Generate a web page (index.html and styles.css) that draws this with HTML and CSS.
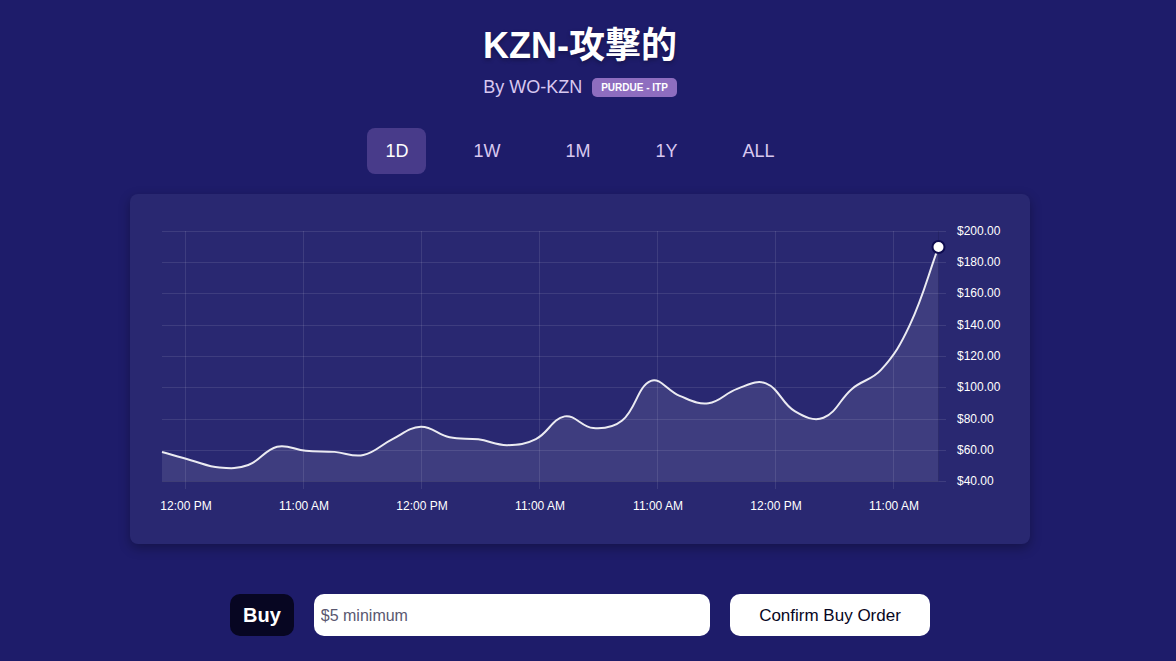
FILE: index.html
```html
<!DOCTYPE html>
<html lang="en">
<head>
<meta charset="utf-8">
<meta name="viewport" content="width=device-width, initial-scale=1">
<title>KZN-攻撃的</title>
<link rel="stylesheet" href="styles.css">
</head>
<body>
<main class="page">
  <header class="heading">
    <h1 class="title">KZN-攻撃的</h1>
    <div class="byline">
      <p class="author">By WO-KZN</p>
      <span class="badge">PURDUE - ITP</span>
    </div>
  </header>
  <nav class="ranges" aria-label="Time range">
    <button type="button" class="range range-active" aria-pressed="true">1D</button>
    <button type="button" class="range">1W</button>
    <button type="button" class="range">1M</button>
    <button type="button" class="range">1Y</button>
    <button type="button" class="range">ALL</button>
  </nav>
  <section class="card">
    <svg class="chart" id="chart" viewBox="0 0 900 350" role="img" aria-label="Price over time">
      <g class="grid" id="grid"></g>
      <g class="labels" id="labels"></g>
      <path class="area" id="area"></path>
      <path class="axis" d="M808.5 37V288M32 287.500H808"></path>
      <path class="line" id="line"></path>
      <circle class="marker" id="marker" r="6"></circle>
    </svg>
  </section>
  <form class="order">
    <label class="order-label" for="amount">Buy</label>
    <input class="amount" id="amount" type="text" placeholder="$5 minimum">
    <button class="confirm" type="button">Confirm Buy Order</button>
  </form>
</main>
<script src="chart.js"></script>
</body>
</html>
```
FILE: styles.css
```css
* {
  box-sizing: border-box;
}

body {
  margin: 0;
  min-height: 100vh;
  background: #1e1c6a;
  color: #fff;
  font-family: "Liberation Sans", "Noto Sans CJK JP", sans-serif;
}

.page {
  display: flex;
  flex-direction: column;
  align-items: center;
  padding: 20px 16px 24px 0;
}

.title {
  margin: 0;
  font-size: 36px;
  line-height: 52px;
  font-weight: 700;
  text-shadow: 0 2px 4px rgba(0, 0, 0, 0.3);
}

.byline {
  display: flex;
  align-items: center;
  justify-content: center;
  gap: 10px;
  margin-top: 4px;
}

.author {
  margin: 0;
  font-size: 18px;
  line-height: 22px;
  color: #d8c8f0;
}

.badge {
  padding: 4px 9px;
  border-radius: 5px;
  background: #8e6dbf;
  font-size: 10px;
  line-height: 11px;
  font-weight: 700;
}

.ranges {
  display: flex;
  gap: 29px;
  margin-top: 30px;
}

.range {
  padding: 12px 18px;
  border: 0;
  border-radius: 8px;
  background: transparent;
  color: #d8c8f0;
  font: inherit;
  font-size: 18px;
  line-height: 22px;
}

.range-active {
  background: #483b8a;
  color: #fff;
}

.card {
  width: 100%;
  max-width: 900px;
  margin-top: 20px;
  border-radius: 8px;
  background: #292871;
  box-shadow: 0 4px 12px rgba(0, 0, 0, 0.3);
}

.chart {
  display: block;
  width: 100%;
}

.grid {
  fill: none;
  stroke: rgba(255, 255, 255, 0.1);
}

.labels {
  fill: #fff;
  font-size: 12px;
}

.label-x {
  text-anchor: middle;
}

.area {
  fill: rgba(255, 255, 255, 0.1);
}

.axis {
  fill: none;
  stroke: rgba(0, 0, 0, 0.1);
}

.line {
  fill: none;
  stroke: rgba(255, 255, 255, 0.9);
  stroke-width: 2;
}

.marker {
  fill: #fff;
  stroke: #0e0c50;
  stroke-width: 2;
}

.order {
  display: flex;
  gap: 20px;
  width: 100%;
  max-width: 700px;
  margin-top: 50px;
}

.order-label {
  padding: 9px 13px;
  border-radius: 10px;
  background: #070622;
  font-size: 20px;
  line-height: 24px;
  font-weight: 700;
}

.amount {
  flex: 1;
  min-width: 0;
  padding: 2px 7px 0;
  border: 0;
  border-radius: 10px;
  background: #fff;
  color: #070622;
  font: inherit;
  font-size: 16px;
}

.amount::placeholder {
  color: #5a5870;
}

.confirm {
  width: 200px;
  padding: 2px 0 0;
  border: 0;
  border-radius: 10px;
  background: #fff;
  color: #070622;
  font: inherit;
  font-size: 17px;
}
```
FILE: chart.js
```js
const SVG = 'http://www.w3.org/2000/svg';
const plot = { left: 32, right: 808.5, top: 37.3, bottom: 287.6 };
const minPrice = 40;
const maxPrice = 200;
const prices = [
  58.9, 53.7, 49, 50.6, 62.3, 59.7, 59, 57, 67, 75, 68.3, 67, 63.3, 67.2,
  81.7, 74.2, 79, 104.4, 94.8, 90.1, 99.3, 102.8, 85, 80.8, 99.4, 111.4, 140, 190
];
const times = ['12:00 PM', '11:00 AM', '12:00 PM', '11:00 AM', '11:00 AM', '12:00 PM', '11:00 AM'];

function add(parent, tag, attrs, text) {
  const el = document.createElementNS(SVG, tag);
  for (const key in attrs) el.setAttribute(key, attrs[key]);
  if (text) el.textContent = text;
  document.getElementById(parent).appendChild(el);
}

const toY = p => plot.bottom - (p - minPrice) / (maxPrice - minPrice) * (plot.bottom - plot.top);

for (let p = minPrice; p <= maxPrice; p += 20) {
  const y = Math.floor(toY(p)) + 0.5;
  add('grid', 'path', { d: `M32 ${y}H816` });
  add('labels', 'text', { x: 827, y: y + 3.5 }, '$' + p.toFixed(2));
}

times.forEach((time, i) => {
  const x = 55.5 + i * 118;
  add('grid', 'path', { d: `M${x} 37V295` });
  add('labels', 'text', { x: x + 0.5, y: 316, class: 'label-x' }, time);
});

const step = (plot.right - plot.left) / (prices.length - 1);
const pts = prices.map((p, i) => ({ x: plot.left + i * step, y: toY(p) }));

// Smooth each segment with control points taken from the neighbouring points.
const tension = 0.4;
const controls = pts.map((pt, i) => {
  const a = pts[i - 1] || pt;
  const b = pts[i + 1] || pt;
  const da = Math.hypot(pt.x - a.x, pt.y - a.y);
  const db = Math.hypot(b.x - pt.x, b.y - pt.y);
  const ka = tension * da / (da + db);
  const kb = tension * db / (da + db);
  return {
    inX: pt.x - ka * (b.x - a.x), inY: pt.y - ka * (b.y - a.y),
    outX: pt.x + kb * (b.x - a.x), outY: pt.y + kb * (b.y - a.y)
  };
});

let d = `M${pts[0].x} ${pts[0].y}`;
for (let i = 1; i < pts.length; i++) {
  const c = controls[i - 1];
  const n = controls[i];
  d += `C${c.outX} ${c.outY} ${n.inX} ${n.inY} ${pts[i].x} ${pts[i].y}`;
}
document.getElementById('line').setAttribute('d', d);
document.getElementById('area').setAttribute('d', `${d}V${plot.bottom}H${plot.left}Z`);

const last = pts[pts.length - 1];
const marker = document.getElementById('marker');
marker.setAttribute('cx', last.x);
marker.setAttribute('cy', last.y);
```
